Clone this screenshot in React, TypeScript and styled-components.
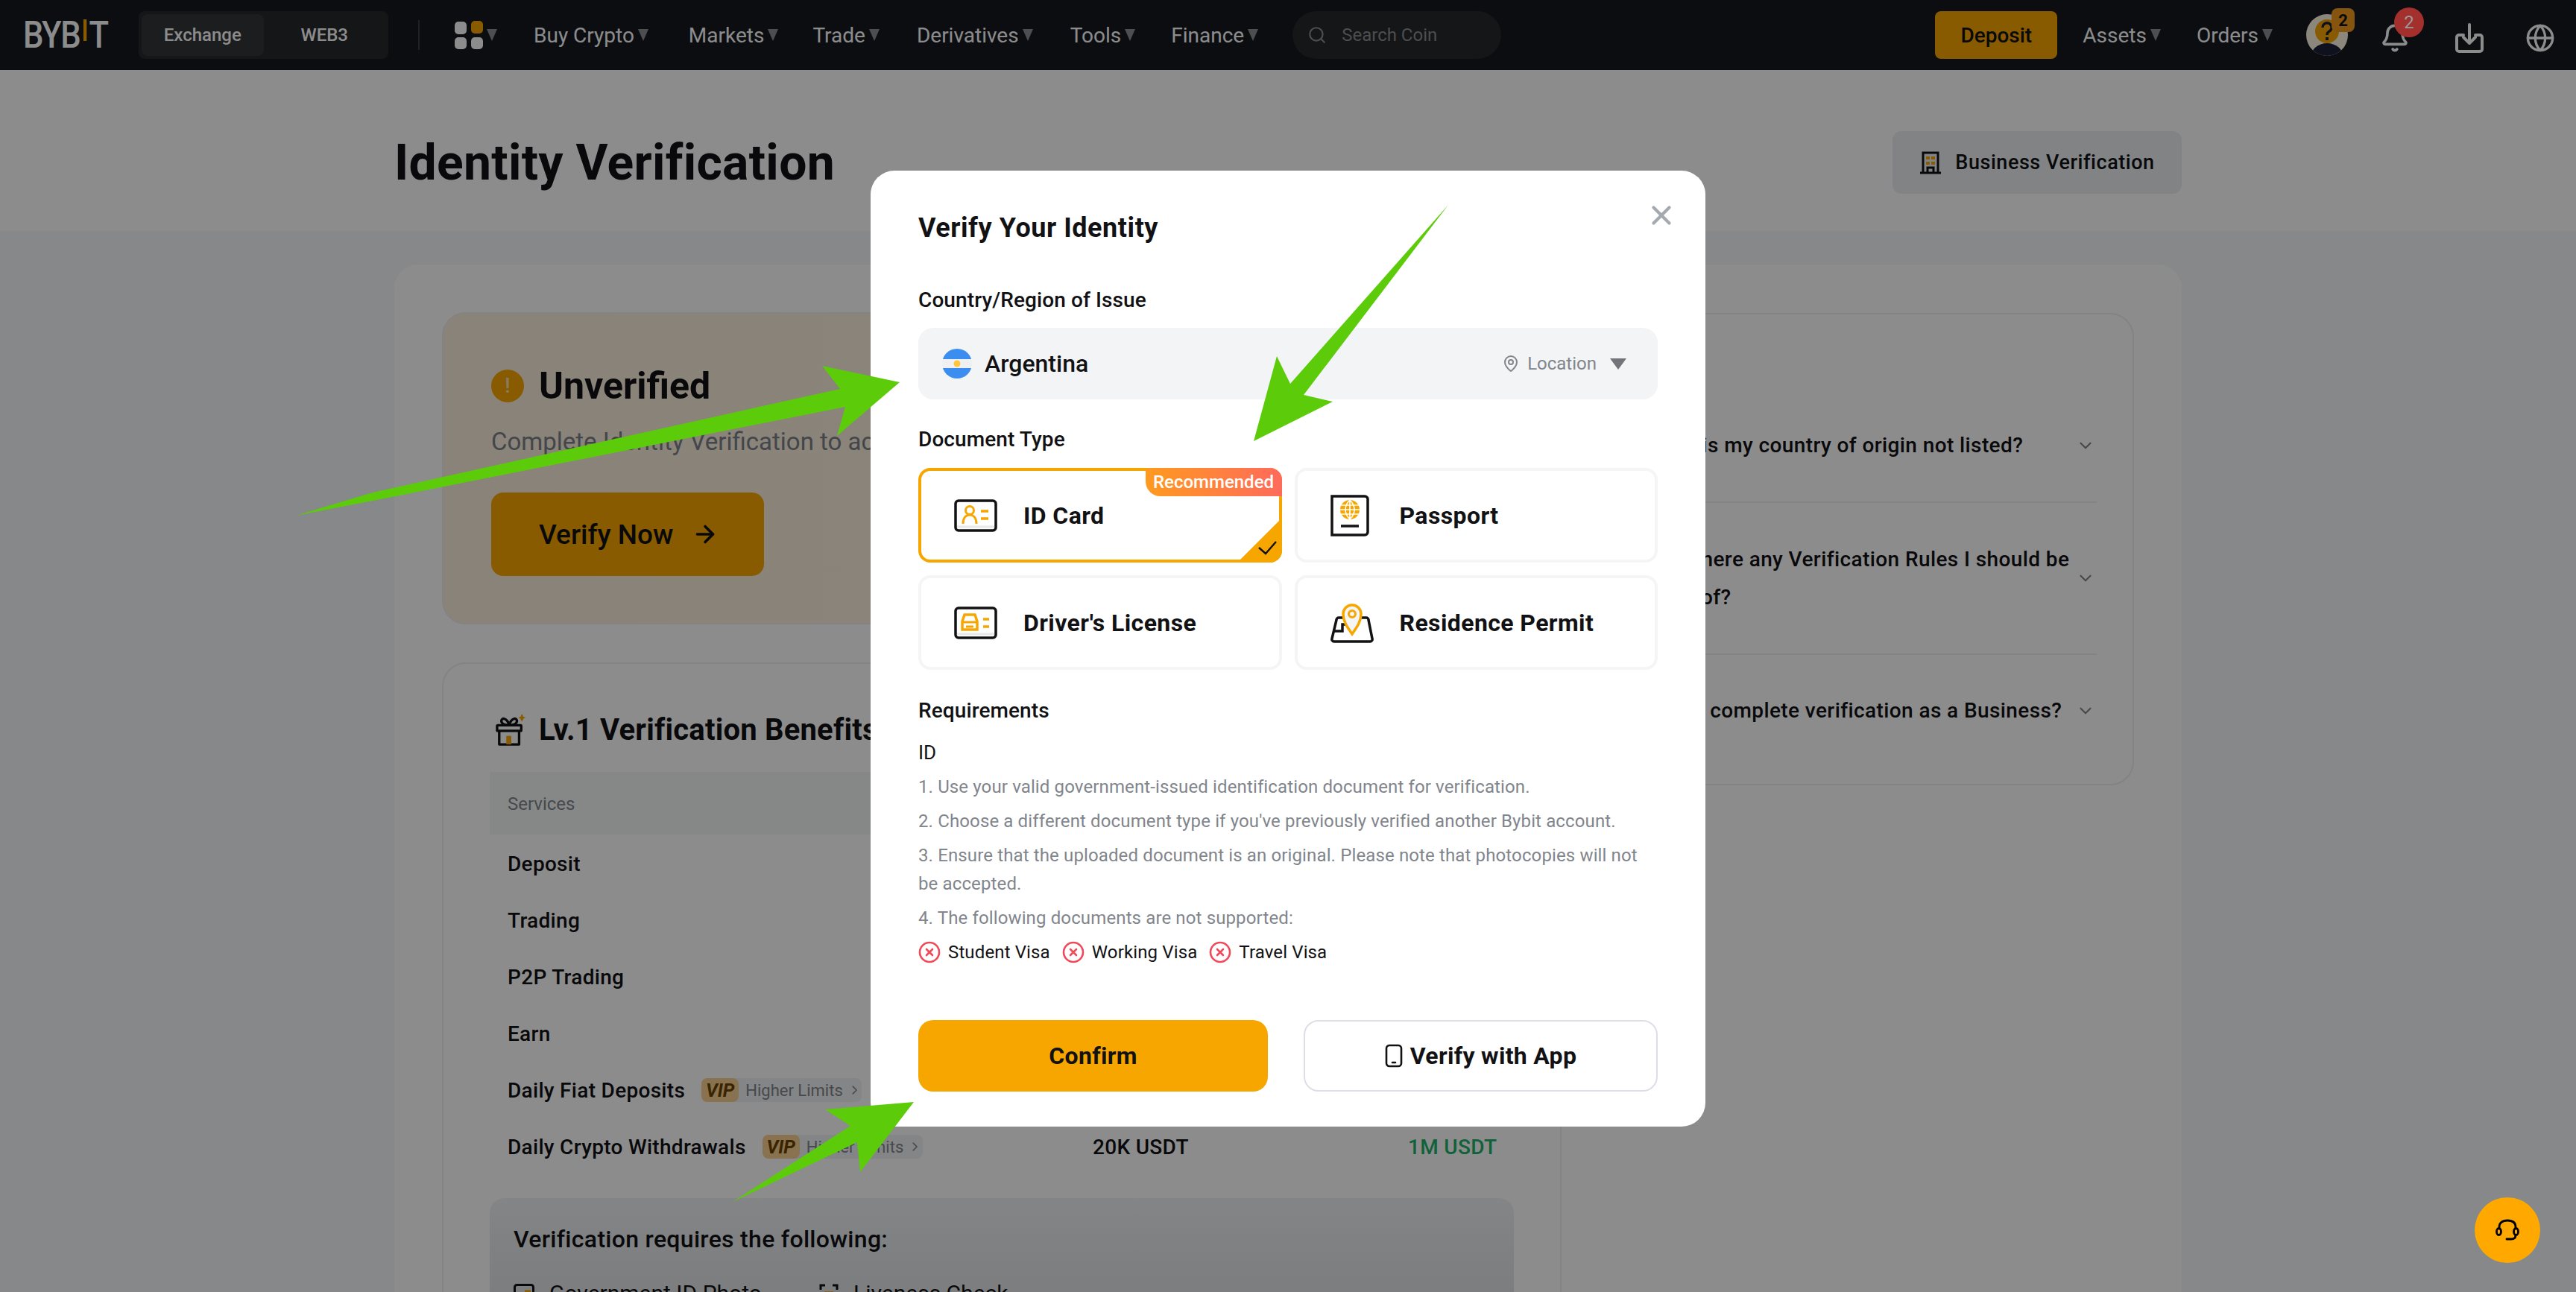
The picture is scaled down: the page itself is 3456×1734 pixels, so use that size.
import React from "react";
import styled, { createGlobalStyle } from "styled-components";
import { ArrowRight, Bell, ChevronDown, ChevronRight, Globe, MapPin, Search, X } from "lucide-react";

const GlobalStyle = createGlobalStyle`
  html, body {
    margin: 0;
    width: 3456px;
    height: 1734px;
    overflow: hidden;
    background: #f5f7fa;
    font-family: Roboto, "Liberation Sans", sans-serif;
    color: #121214;
  }
  * { box-sizing: border-box; }
`;

const Page = styled.div`
  position: relative;
  width: 3456px;
  height: 1734px;
  overflow: hidden;
`;

/* ---------- top bar ---------- */
const Nav = styled.header`
  height: 94px;
  background: #16181f;
  display: flex;
  align-items: center;
  padding: 0 28px 0 31px;
  color: #fff;
`;

const Logo = styled.div`
  display: flex;
  align-items: flex-start;
  flex: none;
  width: 114px;
  font-size: 50px;
  font-weight: 500;
  line-height: 48px;
  letter-spacing: -1.5px;
  transform: scaleX(0.87);
  transform-origin: left center;
  b {
    flex: none;
    width: 5px;
    height: 29px;
    margin: 3px 4px 0 5px;
    background: #f7a600;
  }
  span { font-weight: 500; }
`;

const Tabs = styled.div`
  width: 335px;
  height: 64px;
  margin-left: 41px;
  padding: 4px;
  display: flex;
  border-radius: 8px;
  background: #25282c;
`;

const Tab = styled.div<{ $active?: boolean }>`
  flex: 1;
  display: flex;
  align-items: center;
  justify-content: center;
  border-radius: 8px;
  font-size: 24px;
  font-weight: 500;
  background: ${(p) => (p.$active ? "#32353a" : "transparent")};
`;

const NavDivider = styled.div`
  width: 2px;
  height: 40px;
  margin: 0 47px 0 40px;
  background: #3a3d42;
`;

const Caret = styled.i`
  display: inline-block;
  width: 0;
  height: 0;
  margin-left: 5px;
  border-left: 7px solid transparent;
  border-right: 7px solid transparent;
  border-top: 16px solid #8b8e93;
`;

const NavLink = styled.div<{ $left: number }>`
  display: flex;
  align-items: center;
  margin-left: ${(p) => p.$left}px;
  font-size: 28px;
  white-space: nowrap;
`;

const SearchBox = styled.div`
  width: 280px;
  height: 64px;
  margin-left: 46px;
  padding-left: 20px;
  display: flex;
  align-items: center;
  gap: 20px;
  border-radius: 32px;
  background: #25282c;
  color: #8b8e93;
  font-size: 24px;
`;

const NavRight = styled.div`
  margin-left: auto;
  display: flex;
  align-items: center;
`;

const DepositButton = styled.div`
  width: 164px;
  height: 64px;
  margin-right: 34px;
  display: flex;
  align-items: center;
  justify-content: center;
  border-radius: 8px;
  background: #f7a600;
  color: #121214;
  font-size: 28px;
  font-weight: 500;
`;

const AvatarWrap = styled.div`
  position: relative;
  width: 56px;
  height: 56px;
  margin-left: 45px;
  margin-right: 43px;
`;

const AvatarBadge = styled.div`
  position: absolute;
  left: 34px;
  top: -8px;
  width: 31px;
  height: 32px;
  display: flex;
  align-items: center;
  justify-content: center;
  border-radius: 8px;
  background: #f39a1d;
  color: #121214;
  font-size: 22px;
  font-weight: 700;
`;

const IconSlot = styled.div<{ $left?: number }>`
  position: relative;
  display: flex;
  width: 40px;
  height: 40px;
  align-items: center;
  justify-content: center;
  margin-top: 8px;
  margin-left: ${(p) => p.$left ?? 0}px;
`;

const RedBadge = styled.div`
  position: absolute;
  left: 19px;
  top: -21px;
  z-index: 11;
  width: 40px;
  height: 40px;
  display: flex;
  align-items: center;
  justify-content: center;
  border-radius: 50%;
  background: #a3302c;
  color: #9a9a9a;
  font-size: 24px;
`;

/* ---------- page heading ---------- */
const Hero = styled.section`
  height: 216px;
  padding-top: 81px;
  background: #fff;
`;

const HeroInner = styled.div`
  width: 2398px;
  margin: 0 auto;
  display: flex;
  justify-content: space-between;
  align-items: center;
`;

const PageTitle = styled.h1`
  margin: 2px 0 0;
  font-size: 66px;
  font-weight: 700;
  line-height: 84px;
  letter-spacing: 0.3px;
`;

const BusinessButton = styled.div`
  width: 388px;
  height: 84px;
  display: flex;
  align-items: center;
  justify-content: center;
  gap: 18px;
  border-radius: 12px;
  background: #eceef2;
  font-size: 27px;
  font-weight: 500;
  letter-spacing: 0.55px;
`;

/* ---------- main card ---------- */
const Main = styled.main`
  width: 2398px;
  margin: 45px auto 0;
  padding: 64px;
  display: grid;
  grid-template-columns: 1502px 704px;
  gap: 64px;
  align-items: start;
  border-radius: 32px;
  background: #fff;
`;

const LeftColumn = styled.div`
  display: flex;
  flex-direction: column;
  gap: 51px;
`;

const StatusCard = styled.div`
  height: 419px;
  padding: 65px 64px;
  border: 2px solid #eeeeee;
  border-radius: 32px;
  background: linear-gradient(90deg, #fcefdc, #fbf1e0);
`;

const StatusTitle = styled.div`
  display: flex;
  align-items: center;
  gap: 20px;
  font-size: 50px;
  font-weight: 700;
  line-height: 60px;
  padding-top: 2px;
`;

const WarnDot = styled.div`
  width: 44px;
  height: 44px;
  display: flex;
  align-items: center;
  justify-content: center;
  border-radius: 50%;
  background: #f7a600;
  color: #f6e0b0;
  font-size: 28px;
  font-weight: 500;
`;

const StatusText = styled.p`
  margin: 23px 0 0;
  font-size: 33px;
  line-height: 44px;
  color: #7a8088;
  white-space: nowrap;
`;

const VerifyNow = styled.div`
  width: 366px;
  height: 112px;
  margin-top: 46px;
  padding-left: 64px;
  display: flex;
  align-items: center;
  gap: 24px;
  border-radius: 16px;
  background: #f7a600;
  font-size: 37px;
  font-weight: 500;
`;

const BenefitsCard = styled.div`
  padding: 61px 62px 0;
  height: 1000px;
  border: 2px solid #eeeeee;
  border-radius: 32px;
`;

const BenefitsTitle = styled.h2`
  margin: 0;
  display: flex;
  align-items: center;
  gap: 18px;
  padding-left: 8px;
  font-size: 40px;
  font-weight: 700;
  line-height: 56px;
  letter-spacing: 0.2px;
  white-space: nowrap;
`;

const TableHead = styled.div`
  height: 84px;
  margin-top: 28px;
  padding: 2px 0 0 24px;
  display: flex;
  align-items: center;
  background: #f5f8f8;
  font-size: 24px;
  color: #81858c;
`;

const Row = styled.div`
  height: 76px;
  padding: 2px 0 0 24px;
  display: grid;
  grid-template-columns: 785px 423px 1fr;
  align-items: center;
  font-size: 28px;
  font-weight: 500;
  letter-spacing: 0.3px;
`;

const RowName = styled.div`
  display: flex;
  align-items: center;
  gap: 22px;
  white-space: nowrap;
`;

const Tag = styled.div`
  height: 32px;
  width: 215px;
  display: flex;
  align-items: center;
  border-radius: 8px;
  background: #f1f3f6;
  font-size: 22px;
  font-weight: 400;
  letter-spacing: 0;
  color: #81858c;
  svg { margin-left: 6px; }
`;

const VipMark = styled.span`
  width: 57px;
  height: 32px;
  margin-right: 9px;
  display: flex;
  align-items: center;
  justify-content: center;
  border-radius: 8px;
  background: #f7cf90;
  color: #6b4300;
  font-size: 25px;
  font-weight: 700;
  font-style: italic;
`;

const Value = styled.div<{ $green?: boolean }>`
  color: ${(p) => (p.$green ? "#20b26c" : "#121214")};
`;

const RequireBox = styled.div`
  height: 300px;
  margin-top: 32px;
  padding: 33px 32px;
  border-radius: 20px;
  background: linear-gradient(180deg, #f0f2f5 0, #e2e4e6 126px);
`;

const RequireTitle = styled.div`
  font-size: 32px;
  font-weight: 500;
  line-height: 44px;
  letter-spacing: 0.3px;
`;

const RequireItems = styled.div`
  margin-top: 33px;
  display: flex;
  align-items: center;
  font-size: 30px;
  line-height: 36px;
`;

const RequireItem = styled.div`
  display: flex;
  align-items: center;
  gap: 20px;
  width: 410px;
`;

const FaqCard = styled.aside`
  height: 634px;
  margin-top: 1px;
  padding: 0 48px 0 60px;
  border: 2px solid #eeeeee;
  border-radius: 32px;
`;

const FaqHead = styled.div`
  height: 100px;
  padding-top: 40px;
  font-size: 32px;
  font-weight: 500;
`;

const FaqRow = styled.div<{ $last?: boolean }>`
  display: flex;
  align-items: center;
  justify-content: space-between;
  padding: ${(p) => (p.$last ? "49px" : "50px")} 0 50px;
  border-bottom: ${(p) => (p.$last ? "none" : "2px solid #eeeeee")};
  font-size: 28px;
  font-weight: 500;
  line-height: 51px;
  letter-spacing: 0.4px;
  white-space: nowrap;
  svg { color: #81858c; margin-right: 2px; }
`;

const FaqWrapLine = styled.span`
  display: block;
  margin-left: -24px;
`;

/* ---------- dialog ---------- */
const Backdrop = styled.div`
  position: absolute;
  inset: 0;
  z-index: 10;
  display: flex;
  justify-content: center;
  align-items: flex-start;
  padding-top: 229px;
  background: rgba(0, 0, 0, 0.45);
`;

const Dialog = styled.div`
  position: relative;
  width: 1120px;
  height: 1283px;
  padding: 52px 64px 0 64px;
  border-radius: 32px;
  background: #fff;
`;

const CloseButton = styled.div`
  position: absolute;
  right: 38px;
  top: 39px;
  display: flex;
  color: #a5a9b0;
`;

const DialogTitle = styled.h3`
  margin: 0;
  padding-top: 1px;
  height: 48px;
  font-size: 36px;
  font-weight: 700;
  line-height: 48px;
  letter-spacing: 0.55px;
`;

const FieldLabel = styled.div<{ $top: number }>`
  margin-top: ${(p) => p.$top}px;
  font-size: 28px;
  font-weight: 500;
  line-height: 36px;
  letter-spacing: 0.1px;
`;

const CountrySelect = styled.div`
  height: 96px;
  margin-top: 19px;
  padding: 0 42px 0 32px;
  display: flex;
  align-items: center;
  border-radius: 20px;
  background: #f3f4f6;
`;

const CountryName = styled.div`
  margin-left: 17px;
  font-size: 32px;
  font-weight: 500;
`;

const LocationHint = styled.div`
  margin-left: auto;
  display: flex;
  align-items: center;
  gap: 10px;
  font-size: 24px;
  color: #81858c;
`;

const HintCaret = styled.i`
  width: 0;
  height: 0;
  margin-left: 8px;
  border-left: 11px solid transparent;
  border-right: 11px solid transparent;
  border-top: 15px solid #71757a;
`;

const DocGrid = styled.div`
  margin-top: 20px;
  display: grid;
  grid-template-columns: 1fr 1fr;
  grid-auto-rows: 127px;
  gap: 17px;
`;

const DocCard = styled.div<{ $selected?: boolean }>`
  position: relative;
  display: flex;
  align-items: center;
  border: 4px solid ${(p) => (p.$selected ? "#f7a600" : "#f5f5f5")};
  border-radius: 16px;
  font-size: 32px;
  font-weight: 700;
  letter-spacing: 0.4px;
`;

const DocIcon = styled.div`
  width: 137px;
  padding-left: 44px;
  display: flex;
  align-items: center;
`;

const RecommendedBadge = styled.div`
  position: absolute;
  top: -4px;
  right: -4px;
  width: 183px;
  height: 38px;
  display: flex;
  align-items: center;
  justify-content: center;
  border-radius: 0 16px 0 20px;
  background: linear-gradient(90deg, #ff9a1f, #ff6a5b);
  color: #fff;
  font-size: 24px;
  font-weight: 500;
  letter-spacing: 0;
`;

const CornerCheck = styled.svg`
  position: absolute;
  right: -4px;
  bottom: -4px;
`;

const ReqId = styled.div`
  margin-top: 20px;
  font-size: 26px;
  line-height: 36px;
`;

const ReqList = styled.div`
  margin-top: 9px;
  display: flex;
  flex-direction: column;
  gap: 8px;
  font-size: 24px;
  line-height: 38px;
  letter-spacing: 0.13px;
  color: #81858c;
`;

const VisaRow = styled.div`
  display: flex;
  align-items: center;
  height: 38px;
  color: #121214;
`;

const Visa = styled.span`
  display: flex;
  align-items: center;
  gap: 10px;
  margin-right: 16px;
`;

const DialogActions = styled.div`
  margin-top: 72px;
  display: grid;
  grid-template-columns: 469px 475px;
  gap: 48px;
`;

const ActionButton = styled.div<{ $primary?: boolean }>`
  height: 96px;
  display: flex;
  align-items: center;
  justify-content: center;
  gap: 10px;
  border-radius: 20px;
  border: ${(p) => (p.$primary ? "none" : "2px solid #dcdfe6")};
  background: ${(p) => (p.$primary ? "#f7a600" : "#fff")};
  font-size: 32px;
  font-weight: 700;
  letter-spacing: 0.3px;
`;

const SupportBubble = styled.div`
  position: absolute;
  left: 3320px;
  top: 1607px;
  z-index: 12;
  width: 88px;
  height: 88px;
  display: flex;
  align-items: center;
  justify-content: center;
  border-radius: 50%;
  background: #ffa800;
`;

const ArrowLayer = styled.svg`
  position: absolute;
  left: 0;
  top: 0;
  z-index: 13;
  pointer-events: none;
`;

/* ---------- data ---------- */
const navLinks = [
  { label: "Buy Crypto", left: 49 },
  { label: "Markets", left: 54 },
  { label: "Trade", left: 46 },
  { label: "Derivatives", left: 50 },
  { label: "Tools", left: 50 },
  { label: "Finance", left: 48 },
];

const benefitRows = [
  { name: "Deposit" },
  { name: "Trading" },
  { name: "P2P Trading" },
  { name: "Earn" },
  { name: "Daily Fiat Deposits", vip: true, base: "2K USD", max: "1M USD" },
  { name: "Daily Crypto Withdrawals", vip: true, base: "20K USDT", max: "1M USDT" },
];

const requirements = [
  "1. Use your valid government-issued identification document for verification.",
  "2. Choose a different document type if you've previously verified another Bybit account.",
  "3. Ensure that the uploaded document is an original. Please note that photocopies will not be accepted.",
  "4. The following documents are not supported:",
];

const visas = ["Student Visa", "Working Visa", "Travel Visa"];

/* ---------- drawings ---------- */
const AppsIcon = () => (
  <svg width="38" height="38" viewBox="0 0 38 38">
    <rect x="0" y="1" width="16" height="17" rx="5" fill="#fff" />
    <rect x="22" y="0" width="16" height="17" rx="5" fill="#f7a600" />
    <rect x="0" y="22" width="16" height="16" rx="5" fill="#fff" />
    <rect x="22" y="22" width="16" height="16" rx="5" fill="#fff" />
  </svg>
);

const AvatarIcon = () => (
  <svg width="56" height="56" viewBox="0 0 56 56">
    <defs>
      <clipPath id="avatar-clip">
        <circle cx="28" cy="28" r="28" />
      </clipPath>
    </defs>
    <g clipPath="url(#avatar-clip)">
      <rect width="56" height="56" fill="#fff6e3" />
      <circle cx="28" cy="23" r="16" fill="#f7a600" />
      <ellipse cx="28" cy="58" rx="22" ry="19" fill="#1c2038" />
      <path d="M22 18a6 6 0 1 1 9 5c-2 1-3 2-3 5" fill="none" stroke="#1c2038" strokeWidth="3.5" />
      <rect x="26" y="31" width="4" height="4" fill="#1c2038" />
    </g>
  </svg>
);

const DownloadIcon = () => (
  <svg width="38" height="40" viewBox="0 0 38 40" fill="none" stroke="#fff" strokeWidth="4" strokeLinecap="round" strokeLinejoin="round">
    <path d="M11 16H5a3 3 0 0 0-3 3v16a3 3 0 0 0 3 3h28a3 3 0 0 0 3-3V19a3 3 0 0 0-3-3h-6" />
    <path d="M19 2v24M11 19l8 8 8-8" />
  </svg>
);

const BuildingIcon = () => (
  <svg width="30" height="32" viewBox="0 0 30 32">
    <path d="M5 30V3h20v27M1 30h28" fill="none" stroke="#121214" strokeWidth="3" />
    <rect x="9" y="8" width="5" height="4" fill="#f7a600" />
    <rect x="16" y="8" width="5" height="4" fill="#f7a600" />
    <rect x="9" y="15" width="5" height="4" fill="#f7a600" />
    <rect x="16" y="15" width="5" height="4" fill="#f7a600" />
    <path d="M11 30v-7h8v7" fill="none" stroke="#121214" strokeWidth="3" />
  </svg>
);

const GiftIcon = () => (
  <svg width="40" height="46" viewBox="0 0 42 46" fill="none" stroke="#121214" strokeWidth="3.5" strokeLinejoin="round">
    <rect x="2" y="16" width="34" height="8" rx="1" />
    <path d="M5 24v19h28V24" />
    <path d="M19 16c-6 0-11-2-11-6 0-5 8-5 11 6zM19 16c6 0 11-2 11-6 0-5-8-5-11 6z" />
    <rect x="15" y="31" width="7" height="12" fill="#f7a600" stroke="none" />
    <path d="M37 0l2 4 3 1-3 2-2 4-2-4-3-2 3-1z" fill="#f7a600" stroke="none" />
  </svg>
);

const FlagIcon = () => (
  <svg width="40" height="40" viewBox="0 0 40 40">
    <defs>
      <clipPath id="flag-clip">
        <circle cx="20" cy="20" r="20" />
      </clipPath>
    </defs>
    <g clipPath="url(#flag-clip)">
      <rect width="40" height="14" fill="#3b8ef0" />
      <rect y="14" width="40" height="12" fill="#eef0f2" />
      <rect y="26" width="40" height="14" fill="#3b8ef0" />
      <circle cx="20" cy="20" r="4.5" fill="#ffc53d" />
    </g>
  </svg>
);

const IdCardIcon = () => (
  <svg width="58" height="44" viewBox="0 0 58 44" fill="none">
    <rect x="2" y="2" width="54" height="40" rx="4" stroke="#121214" strokeWidth="3.5" />
    <path d="M4 37h50" stroke="#e8e8e8" strokeWidth="3" />
    <circle cx="21" cy="15" r="5.5" stroke="#f7a600" strokeWidth="3" />
    <path d="M12 33c0-8 4-12 9-12s9 4 9 12" stroke="#f7a600" strokeWidth="3" />
    <path d="M36 16h10M36 26h10" stroke="#f7a600" strokeWidth="3.5" />
  </svg>
);

const LicenseIcon = () => (
  <svg width="58" height="44" viewBox="0 0 58 44" fill="none">
    <rect x="2" y="2" width="54" height="40" rx="4" stroke="#121214" strokeWidth="3.5" />
    <path d="M4 37h50" stroke="#e8e8e8" strokeWidth="3" />
    <path d="M14 11h14l3 9v11H11V20z" stroke="#f7a600" strokeWidth="3.5" />
    <path d="M11 21h20M16 27h10" stroke="#f7a600" strokeWidth="3" />
    <path d="M39 17h8M39 27h8" stroke="#f7a600" strokeWidth="3.5" />
  </svg>
);

const PassportIcon = () => (
  <svg width="52" height="56" viewBox="0 0 52 56" fill="none">
    <path d="M2 2h44a4 4 0 0 1 4 4v44a4 4 0 0 1-4 4H2z" stroke="#121214" strokeWidth="3.5" />
    <circle cx="26" cy="20" r="13" fill="#f7a600" />
    <path d="M13 20h26M14 14h24M14 26h24M26 7v26M26 7c-8 8-8 18 0 26M26 7c8 8 8 18 0 26" stroke="#fff" strokeWidth="1.6" />
    <path d="M14 42h24" stroke="#121214" strokeWidth="3.5" />
  </svg>
);

const ResidenceIcon = () => (
  <svg width="58" height="54" viewBox="0 0 58 54" fill="none">
    <path d="M20 20h-9a3 3 0 0 0-3 3L2 48a3 3 0 0 0 3 4h48a3 3 0 0 0 3-4l-5-25a3 3 0 0 0-3-3h-8" stroke="#121214" strokeWidth="3.5" />
    <path d="M4 38h12v-9h8" stroke="#121214" strokeWidth="3.5" />
    <path d="M29 42C22 32 17 25 17 15a12 12 0 0 1 24 0c0 10-5 17-12 27z" fill="#f5f5f5" stroke="#f7a600" strokeWidth="3.5" />
    <circle cx="29" cy="15" r="4.5" stroke="#f7a600" strokeWidth="3" />
  </svg>
);

const VisaCross = () => (
  <svg width="30" height="30" viewBox="0 0 30 30" fill="none" stroke="#f04a5a" strokeWidth="2.6">
    <circle cx="15" cy="15" r="13" />
    <path d="M11 11l8 8M19 11l-8 8" strokeLinecap="round" />
  </svg>
);

const PhoneIcon = () => (
  <svg width="24" height="32" viewBox="0 0 24 32" fill="none" stroke="#121214" strokeWidth="2.6" strokeLinecap="round">
    <rect x="2" y="2" width="20" height="28" rx="4" />
    <path d="M10 25h4" />
  </svg>
);

const HeadsetIcon = () => (
  <svg width="32" height="32" viewBox="0 0 32 32" fill="none" stroke="#000" strokeWidth="2.8" strokeLinecap="round">
    <path d="M5 14v-2C5 6 9 3 16 3s11 3 11 9v2" />
    <ellipse cx="4.5" cy="18" rx="3" ry="4.5" />
    <ellipse cx="27.5" cy="18" rx="3" ry="4.5" />
    <path d="M27 23c0 4-3 5-6 5h-6" />
  </svg>
);

const IdPhotoIcon = () => (
  <svg width="28" height="26" viewBox="0 0 28 26" fill="none">
    <rect x="1.5" y="1.5" width="25" height="23" rx="3" stroke="#121214" strokeWidth="3" />
    <path d="M15 10h8M15 16h8" stroke="#f7a600" strokeWidth="3" />
  </svg>
);

const LivenessIcon = () => (
  <svg width="26" height="26" viewBox="0 0 26 26" fill="none" stroke="#121214" strokeWidth="3">
    <path d="M2 8V2h6M18 2h6v6M24 18v6h-6M8 24H2v-6" />
    <path d="M9 10v6M13 10v8M17 10v6" stroke="#f7a600" />
  </svg>
);

const App: React.FC = () => {
  return (
    <Page>
      <GlobalStyle />
      <Nav>
        <Logo>
          BYB<b />
          <span>T</span>
        </Logo>
        <Tabs>
          <Tab $active>Exchange</Tab>
          <Tab>WEB3</Tab>
        </Tabs>
        <NavDivider />
        <AppsIcon />
        <Caret />
        {navLinks.map((link) => (
          <NavLink key={link.label} $left={link.left}>
            {link.label}
            <Caret />
          </NavLink>
        ))}
        <SearchBox>
          <Search size={26} strokeWidth={2} />
          Search Coin
        </SearchBox>
        <NavRight>
          <DepositButton>Deposit</DepositButton>
          <NavLink $left={0}>
            Assets
            <Caret />
          </NavLink>
          <NavLink $left={48}>
            Orders
            <Caret />
          </NavLink>
          <AvatarWrap>
            <AvatarIcon />
            <AvatarBadge>2</AvatarBadge>
          </AvatarWrap>
          <IconSlot>
            <Bell size={40} strokeWidth={2.2} />
            <RedBadge>2</RedBadge>
          </IconSlot>
          <IconSlot $left={60}>
            <DownloadIcon />
          </IconSlot>
          <IconSlot $left={55}>
            <Globe size={42} strokeWidth={2} />
          </IconSlot>
        </NavRight>
      </Nav>

      <Hero>
        <HeroInner>
          <PageTitle>Identity Verification</PageTitle>
          <BusinessButton>
            <BuildingIcon />
            Business Verification
          </BusinessButton>
        </HeroInner>
      </Hero>

      <Main>
        <LeftColumn>
          <StatusCard>
            <StatusTitle>
              <WarnDot>!</WarnDot>
              Unverified
            </StatusTitle>
            <StatusText>Complete Identity Verification to access all Bybit products and services.</StatusText>
            <VerifyNow>
              Verify Now
              <ArrowRight size={36} strokeWidth={2.4} />
            </VerifyNow>
          </StatusCard>

          <BenefitsCard>
            <BenefitsTitle>
              <GiftIcon />
              Lv.1 Verification Benefits
            </BenefitsTitle>
            <TableHead>Services</TableHead>
            {benefitRows.map((row) => (
              <Row key={row.name}>
                <RowName>
                  {row.name}
                  {row.vip && (
                    <Tag>
                      <VipMark>VIP</VipMark>
                      Higher Limits
                      <ChevronRight size={22} />
                    </Tag>
                  )}
                </RowName>
                <Value>{row.base}</Value>
                <Value $green>{row.max}</Value>
              </Row>
            ))}
            <RequireBox>
              <RequireTitle>Verification requires the following:</RequireTitle>
              <RequireItems>
                <RequireItem>
                  <IdPhotoIcon />
                  Government ID Photo
                </RequireItem>
                <RequireItem>
                  <LivenessIcon />
                  Liveness Check
                </RequireItem>
              </RequireItems>
            </RequireBox>
          </BenefitsCard>
        </LeftColumn>

        <FaqCard>
          <FaqHead>FAQ</FaqHead>
          <FaqRow>
            Why is my country of origin not listed?
            <ChevronDown size={26} />
          </FaqRow>
          <FaqRow>
            <span>
              Are there any Verification Rules I should be
              <FaqWrapLine>aware of?</FaqWrapLine>
            </span>
            <ChevronDown size={26} />
          </FaqRow>
          <FaqRow $last>
            Can I complete verification as a Business?
            <ChevronDown size={26} />
          </FaqRow>
        </FaqCard>
      </Main>

      <Backdrop>
        <Dialog>
          <CloseButton>
            <X size={42} strokeWidth={2.4} />
          </CloseButton>
          <DialogTitle>Verify Your Identity</DialogTitle>

          <FieldLabel $top={56}>Country/Region of Issue</FieldLabel>
          <CountrySelect>
            <FlagIcon />
            <CountryName>Argentina</CountryName>
            <LocationHint>
              <MapPin size={24} strokeWidth={2} />
              Location
              <HintCaret />
            </LocationHint>
          </CountrySelect>

          <FieldLabel $top={36}>Document Type</FieldLabel>
          <DocGrid>
            <DocCard $selected>
              <DocIcon>
                <IdCardIcon />
              </DocIcon>
              ID Card
              <RecommendedBadge>Recommended</RecommendedBadge>
              <CornerCheck width="60" height="60" viewBox="0 0 60 60">
                <path d="M60 0v44a16 16 0 0 1-16 16H0z" fill="#f7a600" />
                <path d="M29 40l9 8 14-16" fill="none" stroke="#121214" strokeWidth="2.4" />
              </CornerCheck>
            </DocCard>
            <DocCard>
              <DocIcon>
                <PassportIcon />
              </DocIcon>
              Passport
            </DocCard>
            <DocCard>
              <DocIcon>
                <LicenseIcon />
              </DocIcon>
              Driver's License
            </DocCard>
            <DocCard>
              <DocIcon>
                <ResidenceIcon />
              </DocIcon>
              Residence Permit
            </DocCard>
          </DocGrid>

          <FieldLabel $top={37}>Requirements</FieldLabel>
          <ReqId>ID</ReqId>
          <ReqList>
            {requirements.map((line) => (
              <div key={line}>{line}</div>
            ))}
            <VisaRow>
              {visas.map((visa) => (
                <Visa key={visa}>
                  <VisaCross />
                  {visa}
                </Visa>
              ))}
            </VisaRow>
          </ReqList>

          <DialogActions>
            <ActionButton $primary>Confirm</ActionButton>
            <ActionButton>
              <PhoneIcon />
              Verify with App
            </ActionButton>
          </DialogActions>
        </Dialog>
      </Backdrop>

      <SupportBubble>
        <HeadsetIcon />
      </SupportBubble>

      <ArrowLayer width="3456" height="1734" viewBox="0 0 3456 1734">
        <polygon fill="#5ccc0a" points="397,692 500,661 1127,522 1103,491 1207,513 1123,585 1134,546 500,672" />
        <polygon fill="#5ccc0a" points="1943,275 1731,515 1713,478 1682,592 1788,539 1749,530" />
        <polygon fill="#5ccc0a" points="983,1613 1141,1511 1107,1489 1226,1479 1154,1573 1150,1533" />
      </ArrowLayer>
    </Page>
  );
};

export default App;
